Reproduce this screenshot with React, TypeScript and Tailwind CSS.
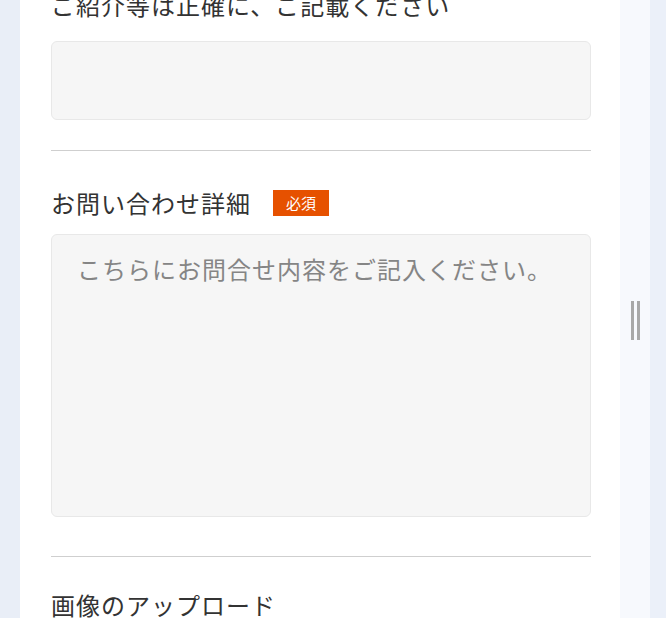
import React from "react";

const font = { fontFamily: '"Noto Sans CJK JP", "Noto Sans", sans-serif' };

const Divider = ({ className = "" }: { className?: string }) => (
  <div className={`h-px bg-[#cfcfcf] ${className}`} />
);

const App = () => {
  return (
    <div className="flex h-[618px] w-[666px] overflow-hidden bg-[#e9eef7]" style={font}>
      {/* left gutter */}
      <div className="w-[20px] shrink-0 bg-[#e9eef7]" />

      {/* form panel */}
      <div className="w-[600px] shrink-0 bg-white pl-[31px] pr-[29px] text-[#333]">
        <div className="mt-[-11px] h-[32px] text-[24px] leading-[32px] tracking-[1px]">ご紹介等は正確に、ご記載ください</div>
        <input
          type="text"
          className="mt-[20px] block h-[79px] w-full rounded-[6px] border border-[#e8e8e8] bg-[#f6f6f6] px-[27px] text-[24px] outline-none"
        />

        <Divider className="mt-[30px]" />

        <div className="mt-[39px] flex h-[26px] items-center">
          <span className="text-[24px] leading-[26px] tracking-[1px]">お問い合わせ詳細</span>
          <span className="ml-[22px] flex h-[26px] w-[56px] items-center justify-center bg-[#e65100] text-[15px] text-white">
            必須
          </span>
        </div>

        <textarea
          placeholder="こちらにお問合せ内容をご記入ください。"
          className="mt-[18px] block h-[283px] w-full resize-none rounded-[6px] border border-[#e8e8e8] bg-[#f6f6f6] px-[25px] pt-[18px] text-[24px] leading-[32px] tracking-[1px] outline-none placeholder:text-[#858585]"
        />

        <Divider className="mt-[39px]" />

        <div className="mt-[32px] text-[24px] leading-[32px] tracking-[1px]">画像のアップロード</div>
      </div>

      {/* splitter */}
      <div className="flex w-[30px] shrink-0 items-start justify-center bg-[#f7f9fd] pt-[301px]">
        <div className="flex gap-[3px]">
          <div className="h-[39px] w-[3px] bg-[#a8a8a8]" />
          <div className="h-[39px] w-[3px] bg-[#a8a8a8]" />
        </div>
      </div>

      <div className="flex-1 bg-[#ebf0f9]" />
    </div>
  );
};

export default App;
